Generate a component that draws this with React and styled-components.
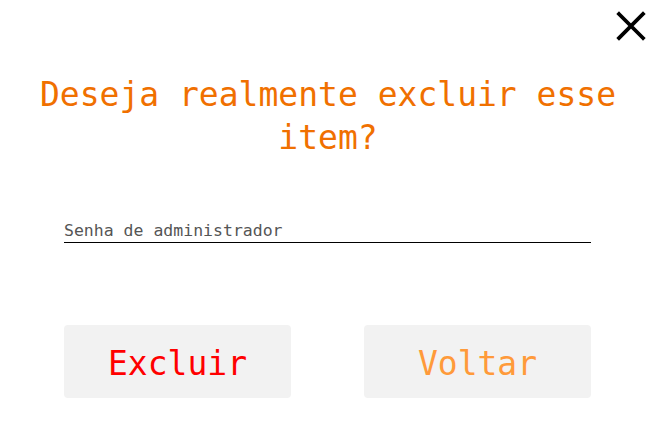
import React from 'react'
import styled, { createGlobalStyle } from 'styled-components'

const GlobalStyle = createGlobalStyle`
  body {
    margin: 0;
    background: #fff;
    font-family: "DejaVu Sans Mono", "Liberation Mono", monospace;
  }
`

function App() {
  return (
    <>
      <GlobalStyle />
      <Modal>
        <TopBar>
          <CloseButton aria-label="Fechar">
            <svg width="30" height="30" viewBox="0 0 30 30">
              <path d="M3 3 L27 27 M27 3 L3 27" stroke="#000" strokeWidth="3.8" strokeLinecap="square" />
            </svg>
          </CloseButton>
        </TopBar>
        <Title>Deseja realmente excluir esse item?</Title>
        <Field>
          <PasswordInput type="password" placeholder="Senha de administrador" />
        </Field>
        <Actions>
          <ActionButton color="#ff0000">Excluir</ActionButton>
          <ActionButton color="#ff9a3a">Voltar</ActionButton>
        </Actions>
      </Modal>
    </>
  )
}

const Modal = styled.div`
  width: 656px;
  height: 444px;
  display: flex;
  flex-direction: column;
  box-sizing: border-box;
`

const TopBar = styled.div`
  display: flex;
  justify-content: flex-end;
  padding: 11px 10px 0 0;
  height: 32px;
`

const CloseButton = styled.button`
  border: none;
  background: none;
  padding: 0;
  width: 30px;
  height: 30px;
  cursor: pointer;
`

const Title = styled.h2`
  margin: 30px auto 0;
  width: 600px;
  text-align: center;
  font-weight: normal;
  font-size: 33px;
  line-height: 43px;
  color: #f07000;
`

const Field = styled.div`
  padding: 0 65px 0 64px;
  margin-top: 61px;
`

const PasswordInput = styled.input`
  width: 100%;
  box-sizing: border-box;
  border: none;
  border-bottom: 1px solid #000;
  padding: 1px 0 2px;
  font-family: inherit;
  font-size: 16.5px;
  outline: none;
  &::placeholder {
    color: #555;
  }
`

const Actions = styled.div`
  display: grid;
  grid-template-columns: 227px 227px;
  justify-content: space-between;
  padding: 0 65px 0 64px;
  margin-top: 82px;
`

const ActionButton = styled.button`
  height: 73px;
  padding: 4px 0 0;
  border: none;
  border-radius: 4px;
  background: #f2f2f2;
  color: ${(p) => p.color};
  font-family: inherit;
  font-size: 33px;
  cursor: pointer;
`

export default App
